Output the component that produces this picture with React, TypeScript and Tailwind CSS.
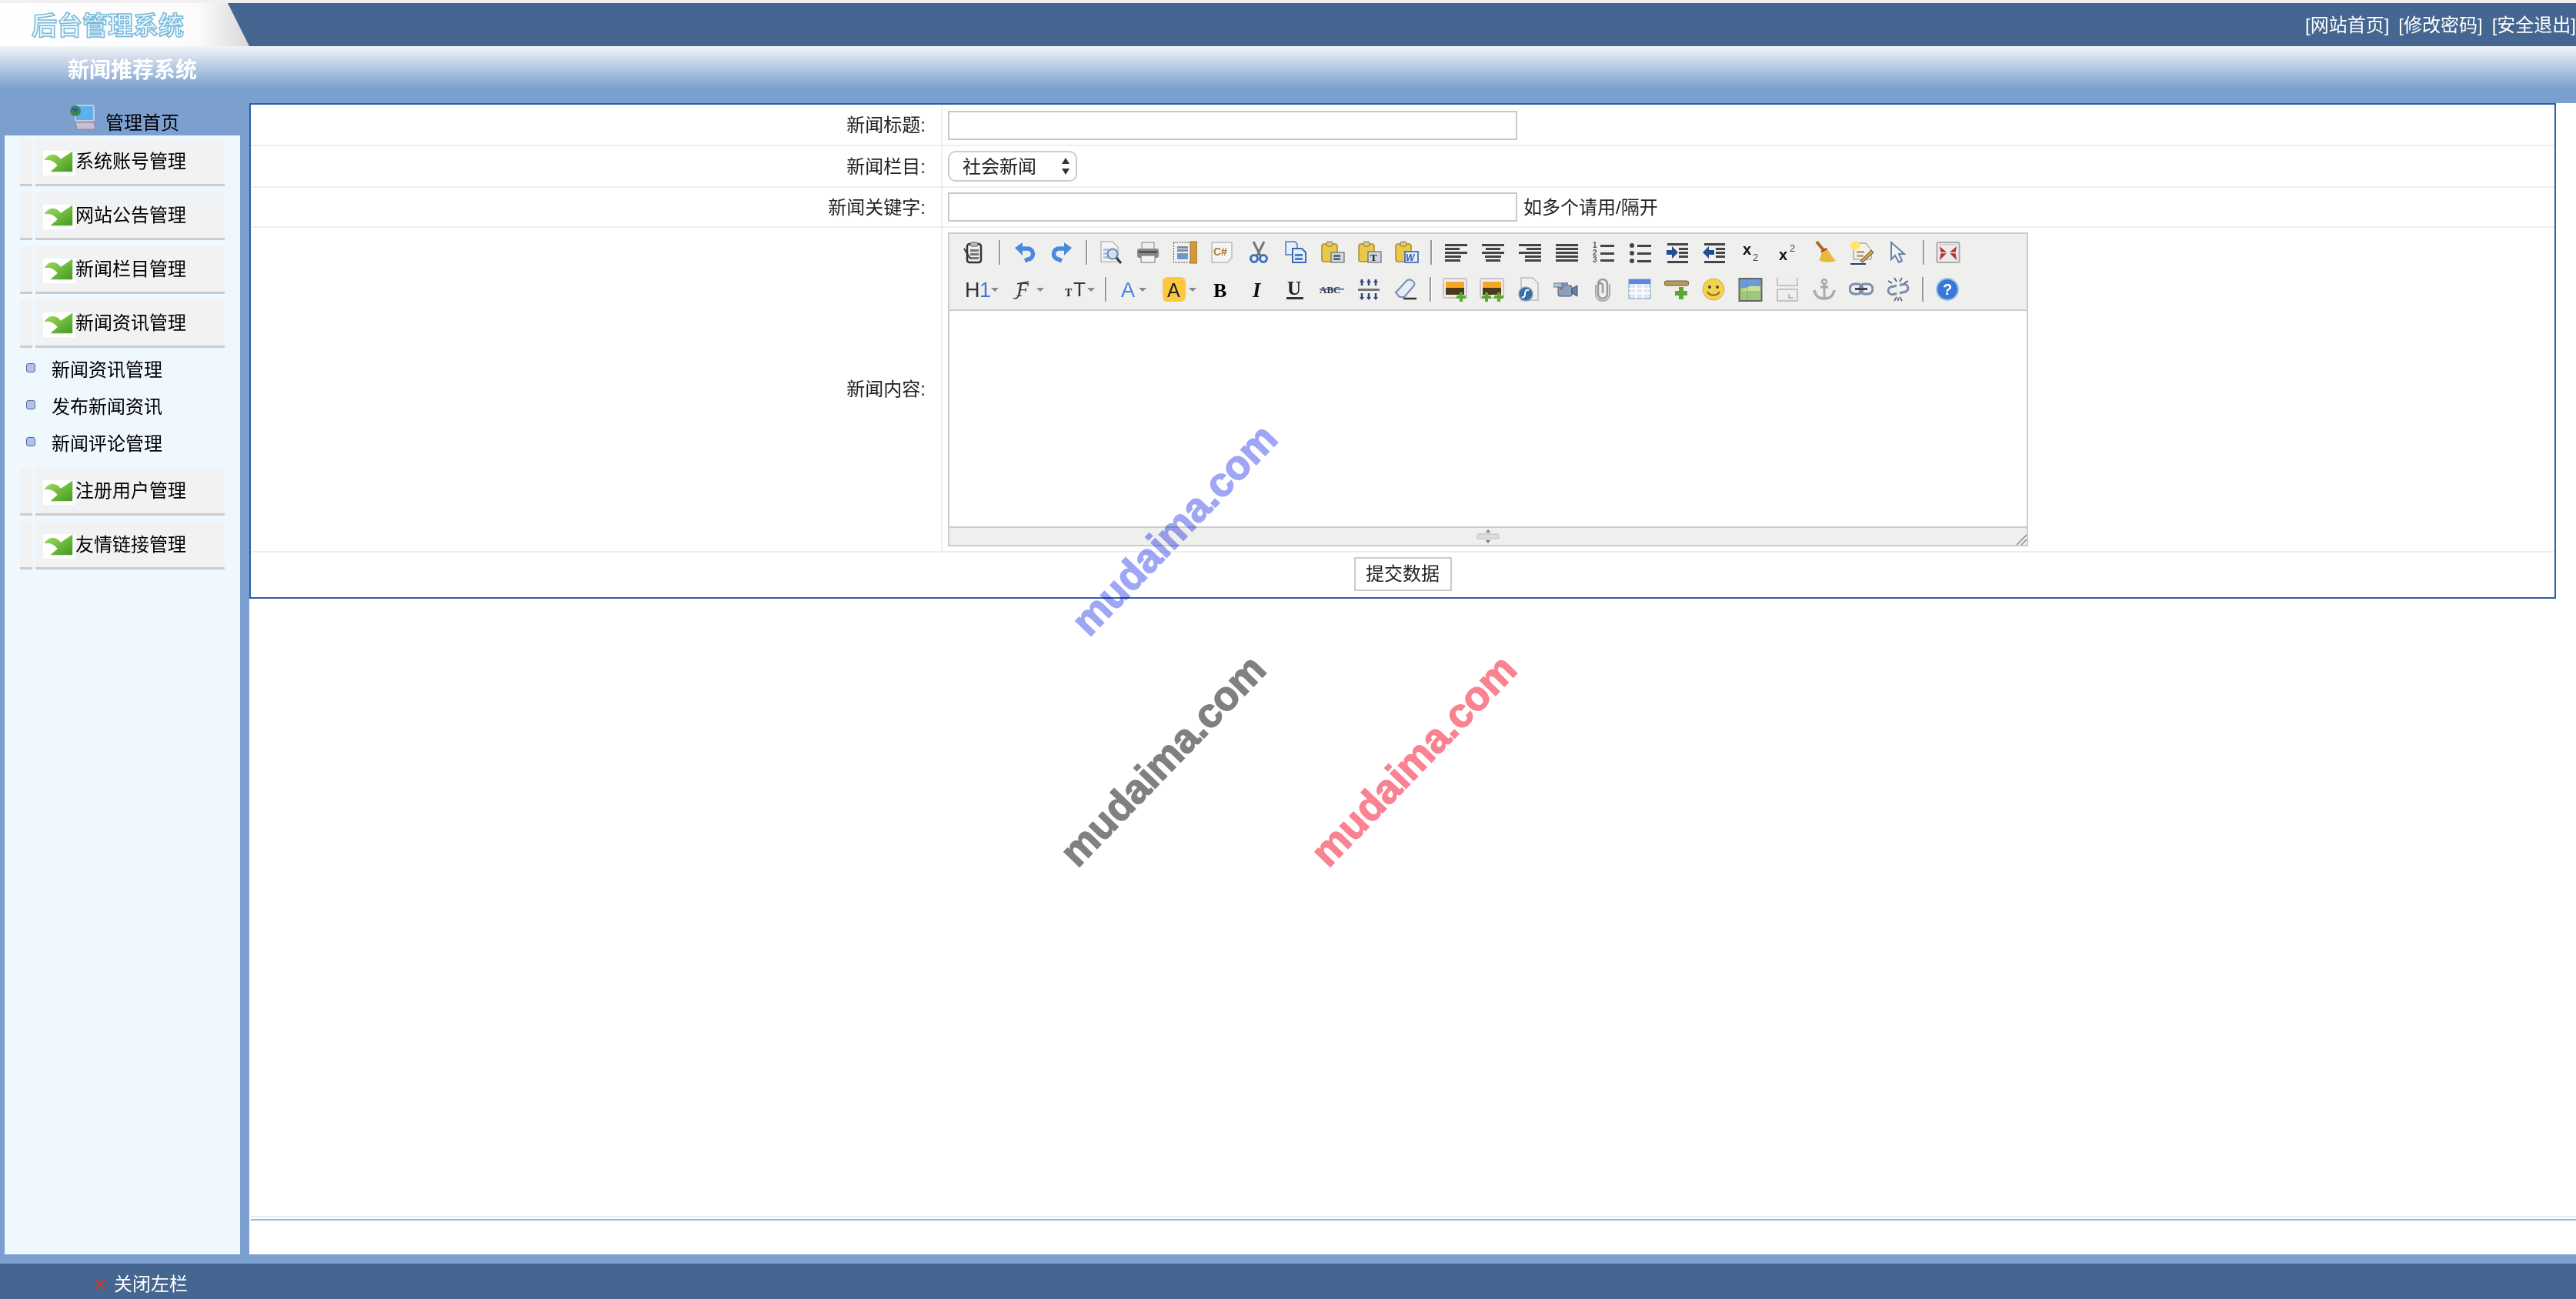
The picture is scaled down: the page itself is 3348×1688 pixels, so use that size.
import type { ReactNode } from "react";

const Svg = ({ w = 32, children }: { w?: number; children: ReactNode }) => (
  <svg width={w} height={32} viewBox={`0 0 ${w} 32`} className="block shrink-0">
    {children}
  </svg>
);

const Lines = ({ rows, color = "#444" }: { rows: [number, number, number][]; color?: string }) => (
  <>
    {rows.map(([x, y, w], i) => (
      <rect key={i} x={x} y={y} width={w} height={3} fill={color} />
    ))}
  </>
);

const Clip = ({ children }: { children?: ReactNode }) => (
  <>
    <rect x="2" y="5" width="20" height="23" rx="3" fill="#e9c84a" stroke="#a98a35" strokeWidth="1.5" />
    <rect x="8" y="2" width="8" height="6" rx="2" fill="#d8c88a" stroke="#8a7430" />
    {children}
  </>
);

const DropArrow = ({ x }: { x: number }) => <path d={`M${x} 14h10l-5 5z`} fill="#888" />;

const Img = ({ x = 1 }: { x?: number }) => (
  <>
    <rect x={x} y="2" width="30" height="25" rx="1" fill="#eee" stroke="#bbb" strokeWidth="1.5" />
    <rect x={x + 3} y="6" width="24" height="8" fill="#f5a623" />
    <rect x={x + 3} y="14" width="24" height="9" fill="#4a3a16" />
  </>
);

const Plus = ({ x, y }: { x: number; y: number }) => (
  <path d={`M${x - 2} ${y - 6}h4v4h4v4h-4v4h-4v-4h-4v-4h4z`} fill="#5aa832" />
);

const row1: (ReactNode | null)[] = [
  <Svg>
    <rect x="7" y="5" width="18" height="24" rx="3" fill="#eee" stroke="#333" strokeWidth="2.5" />
    <rect x="11" y="3" width="10" height="5" rx="2" fill="#bbb" stroke="#555" />
    <Lines color="#777" rows={[[11, 12, 11], [11, 17, 11], [11, 22, 11]]} />
    <path d="M3 11l8 13" stroke="#333" strokeWidth="2" />
  </Svg>,
  null,
  <Svg>
    <path d="M11 11h8a7 7 0 0 1 1 14l-4 2" fill="none" stroke="#4a8ade" strokeWidth="5.5" />
    <path d="M13 3v17L3 10z" fill="#4a8ade" />
  </Svg>,
  <Svg>
    <path d="M21 11h-8a7 7 0 0 0-1 14l4 2" fill="none" stroke="#4a8ade" strokeWidth="5.5" />
    <path d="M19 3v17l10-10z" fill="#4a8ade" />
  </Svg>,
  null,
  <Svg>
    <path d="M3 2h15l7 7v19H3z" fill="#f4f4f4" stroke="#bbb" strokeWidth="1.5" />
    <Lines color="#a9c4e4" rows={[[6, 11, 7], [6, 16, 6], [6, 21, 7]]} />
    <circle cx="18" cy="18" r="6.5" fill="#cfe0f2" stroke="#6a8aa8" strokeWidth="2" />
    <path d="M23 23l6 7" stroke="#333" strokeWidth="3" />
  </Svg>,
  <Svg>
    <rect x="8" y="3" width="16" height="9" fill="#eee" stroke="#888" />
    <rect x="2" y="11" width="28" height="12" rx="3" fill="#888" />
    <rect x="4" y="14" width="24" height="3" fill="#555" />
    <rect x="7" y="20" width="18" height="9" fill="#f4f4f4" stroke="#777" />
  </Svg>,
  <Svg>
    <rect x="1.5" y="3" width="24" height="26" fill="#f2f2f2" stroke="#444" strokeDasharray="2 1.5" />
    <Lines color="#7f8ea4" rows={[[6, 8, 14], [6, 12, 14]]} />
    <rect x="6" y="17" width="14" height="8" fill="#6a9ac8" />
    <rect x="23" y="2" width="9" height="28" fill="#d09a3c" stroke="#a0702a" />
  </Svg>,
  <Svg>
    <path d="M3 3h26v20l-6 6H3z" fill="#f4f4f4" stroke="#bbb" strokeWidth="1.5" />
    <text x="5" y="20" fontSize="14" fontWeight="700" fill="#a87c3c" fontFamily="Liberation Sans, sans-serif">C#</text>
  </Svg>,
  <Svg>
    <path d="M9 2l9 18M23 2l-9 18" stroke="#777" strokeWidth="3" />
    <circle cx="10" cy="24" r="4.5" fill="none" stroke="#3a70c0" strokeWidth="3" />
    <circle cx="22" cy="24" r="4.5" fill="none" stroke="#3a70c0" strokeWidth="3" />
  </Svg>,
  <Svg>
    <path d="M3 2h12l3 3v14H3z" fill="#e4effb" stroke="#4a7ac0" strokeWidth="1.5" />
    <path d="M12 11h12l5 5v13H12z" fill="#e4effb" stroke="#3a6ab4" strokeWidth="2" />
    <Lines color="#4a7ac0" rows={[[15, 18, 10], [15, 23, 10]]} />
  </Svg>,
  <Svg>
    <Clip />
    <rect x="14" y="16" width="17" height="13" fill="#cdd8e4" stroke="#555" />
    <Lines color="#667" rows={[[17, 19, 9], [17, 23, 9]]} />
  </Svg>,
  <Svg>
    <Clip />
    <rect x="14" y="15" width="17" height="14" fill="#cdd8e4" stroke="#555" />
    <text x="17" y="27" fontSize="13" fontWeight="700" fill="#111" fontFamily="Liberation Serif, serif">T</text>
  </Svg>,
  <Svg>
    <Clip />
    <rect x="14" y="15" width="17" height="14" fill="#e4effb" stroke="#2a5ab0" strokeWidth="1.5" />
    <text x="15" y="27" fontSize="12" fontWeight="700" fontStyle="italic" fill="#2a5ab0" fontFamily="Liberation Sans, sans-serif">W</text>
  </Svg>,
  null,
  <Svg><Lines rows={[[2, 5, 29], [2, 10, 19], [2, 15, 29], [2, 20, 21], [2, 25, 20]]} /></Svg>,
  <Svg><Lines rows={[[2, 5, 29], [7, 10, 19], [2, 15, 29], [6, 20, 21], [7, 25, 19]]} /></Svg>,
  <Svg><Lines rows={[[2, 5, 29], [12, 10, 19], [2, 15, 29], [10, 20, 21], [10, 25, 21]]} /></Svg>,
  <Svg><Lines rows={[[2, 5, 29], [2, 10, 29], [2, 15, 29], [2, 20, 29], [2, 25, 29]]} /></Svg>,
  <Svg>
    <Lines rows={[[12, 6, 18], [12, 16, 18], [12, 25, 18]]} />
    <text x="2" y="10" fontSize="10" fontWeight="700" fill="#555" fontFamily="Liberation Sans, sans-serif">1</text>
    <text x="2" y="20" fontSize="10" fontWeight="700" fill="#555" fontFamily="Liberation Sans, sans-serif">2</text>
    <text x="2" y="29" fontSize="10" fontWeight="700" fill="#555" fontFamily="Liberation Sans, sans-serif">3</text>
  </Svg>,
  <Svg>
    <Lines rows={[[12, 6, 18], [12, 16, 18], [12, 26, 18]]} />
    <circle cx="5" cy="7" r="3" fill="#444" />
    <circle cx="5" cy="17" r="3" fill="#444" />
    <circle cx="5" cy="27" r="3" fill="#444" />
  </Svg>,
  <Svg>
    <Lines rows={[[3, 4, 27], [18, 10, 12], [18, 15, 12], [18, 20, 12], [3, 27, 27]]} />
    <path d="M2 13h7V8l8 8-8 8v-5H2z" fill="#1f4f90" />
  </Svg>,
  <Svg>
    <Lines rows={[[3, 4, 27], [18, 10, 12], [18, 15, 12], [18, 20, 12], [3, 27, 27]]} />
    <path d="M16 13H9V8l-8 8 8 8v-5h7z" fill="#1f4f90" />
  </Svg>,
  <Svg>
    <text x="5" y="19" fontSize="20" fontWeight="700" fill="#111" fontFamily="Liberation Sans, sans-serif">x</text>
    <text x="18" y="27" fontSize="13" fill="#446" fontFamily="Liberation Sans, sans-serif">2</text>
  </Svg>,
  <Svg>
    <text x="4" y="26" fontSize="20" fontWeight="700" fill="#111" fontFamily="Liberation Sans, sans-serif">x</text>
    <text x="18" y="15" fontSize="13" fill="#446" fontFamily="Liberation Sans, sans-serif">2</text>
  </Svg>,
  <Svg>
    <path d="M5 2l9 11" stroke="#a86a2a" strokeWidth="4" />
    <path d="M11 13l7-3c5 8 8 13 12 17-8 3-16 2-22-1 3-4 4-8 3-13z" fill="#e6b83c" />
    <path d="M11 15l7-4" stroke="#c0392b" strokeWidth="2.5" />
  </Svg>,
  <Svg>
    <path d="M5 4h16l7 9v12H5z" fill="#f6f1e2" stroke="#888" />
    <circle cx="7" cy="7" r="6" fill="#ffe666" />
    <Lines color="#b8a890" rows={[[9, 14, 10], [9, 19, 9]]} />
    <path d="M14 27l14-14 3 3-14 13z" fill="#d9a233" stroke="#445" />
    <path d="M1 31h20" stroke="#1f3f70" strokeWidth="2" />
  </Svg>,
  <Svg>
    <path d="M6 3v22l5-5 5 9 4-2-4-9h7z" fill="#f0f4fa" stroke="#6a82a8" strokeWidth="2" />
  </Svg>,
  null,
  <Svg>
    <rect x="1.5" y="3" width="29" height="26" rx="1.5" fill="#ececec" stroke="#aaa" strokeWidth="2" />
    <path d="M6 10l6 5H7zM26 10l-6 5h5zM6 24l6-6H7zM26 24l-6-6h5z" fill="#b8312a" stroke="#b8312a" strokeWidth="1.5" />
    <rect x="4" y="5" width="24" height="1.5" fill="#ccc" />
  </Svg>,
];

const row2: ReactNode[] = [
  <Svg w={64}>
    <text x="12" y="26" fontSize="27" fill="#333" fontFamily="Liberation Sans, sans-serif">H</text>
    <text x="31" y="26" fontSize="27" fill="#3b78d8" fontFamily="Liberation Sans, sans-serif">1</text>
    <DropArrow x={46} />
  </Svg>,
  <Svg w={60}>
    <text x="15" y="25" fontSize="26" fontStyle="italic" fill="#333" fontFamily="Liberation Serif, serif">F</text>
    <path d="M11 27c3 2 5 1 7-3M16 9c4-2 10-1 15-3" stroke="#333" strokeWidth="1.5" fill="none" />
    <DropArrow x={41} />
  </Svg>,
  <Svg w={63}>
    <text x="18" y="25" fontSize="14" fontWeight="700" fill="#222" fontFamily="Liberation Serif, serif">T</text>
    <text x="29" y="25" fontSize="26" fill="#333" fontFamily="Liberation Sans, sans-serif">T</text>
    <DropArrow x={47} />
  </Svg>,
  null,
  <Svg w={55}>
    <text x="12" y="26" fontSize="27" fill="#4a80e0" fontFamily="Liberation Sans, sans-serif">A</text>
    <DropArrow x={35} />
  </Svg>,
  <Svg w={63}>
    <rect x="11" y="0" width="30" height="32" rx="6" fill="#fdc840" />
    <text x="17" y="26" fontSize="25" fill="#222" fontFamily="Liberation Sans, sans-serif">A</text>
    <DropArrow x={45} />
  </Svg>,
  <Svg>
    <text x="6" y="26" fontSize="26" fontWeight="700" fill="#000" fontFamily="Liberation Serif, serif">B</text>
  </Svg>,
  <Svg>
    <text x="9" y="26" fontSize="27" fontWeight="700" fontStyle="italic" fill="#111" fontFamily="Liberation Serif, serif">I</text>
  </Svg>,
  <Svg>
    <text x="6" y="23" fontSize="25" fontWeight="700" fill="#222" fontFamily="Liberation Serif, serif">U</text>
    <rect x="5" y="26" width="22" height="3" fill="#333" />
  </Svg>,
  <Svg>
    <text x="0" y="21" fontSize="13" fontWeight="700" fill="#333" fontFamily="Liberation Serif, serif">ABC</text>
    <rect x="0" y="15" width="32" height="1.5" fill="#2a5ab0" />
  </Svg>,
  <Svg>
    <rect x="2" y="15" width="28" height="3" fill="#777" />
    <path d="M7 3v8M16 3v8M25 3v8M7 21v8M16 21v8M25 21v8" stroke="#2a4a80" strokeWidth="2.5" />
    <path d="M4 7l3-4 3 4zM13 7l3-4 3 4zM22 7l3-4 3 4zM4 26l3 4 3-4zM13 26l3 4 3-4zM22 26l3 4 3-4z" fill="#2a4a80" />
  </Svg>,
  <Svg>
    <path d="M3 20L17 5c2-2 5-2 8 0 3 2 3 5 1 7L14 26H8z" fill="#e4ecf6" stroke="#7a8ea8" strokeWidth="2" />
    <path d="M13 28h17" stroke="#333" strokeWidth="2.5" />
  </Svg>,
  null,
  <Svg>
    <Img />
    <Plus x={24} y={26} />
  </Svg>,
  <Svg>
    <Img />
    <Plus x={9} y={26} />
    <Plus x={25} y={26} />
  </Svg>,
  <Svg>
    <path d="M6 1h15l7 7v22H6z" fill="#f0f0f0" stroke="#bbb" strokeWidth="1.5" />
    <circle cx="12" cy="22" r="9" fill="#3a6ea8" stroke="#8aa0b8" strokeWidth="1.5" />
    <path d="M16 17c-4-1-5 2-5 5s-1 5-4 4" stroke="#fff" strokeWidth="2" fill="none" />
  </Svg>,
  <Svg>
    <rect x="6" y="11" width="18" height="14" rx="2" fill="#8aa0bc" stroke="#4a5e7c" />
    <rect x="0" y="8" width="14" height="5" rx="1" fill="#b8c8dc" stroke="#5a6e8c" />
    <rect x="10" y="7" width="9" height="5" fill="#7a8ea8" />
    <circle cx="10" cy="15" r="1.5" fill="#d84a3a" />
    <path d="M24 15l7-4v14l-7-4z" fill="#6a80a0" stroke="#3a4e6c" />
  </Svg>,
  <Svg>
    <path d="M10 9a6 6 0 0 1 12 0v13a6 6 0 0 1-12 0V11a3 3 0 0 1 6 0v10" fill="none" stroke="#999" strokeWidth="2.5" />
    <path d="M7 10v13a9 8 0 0 0 18 0V9" fill="none" stroke="#aaa" strokeWidth="2" />
  </Svg>,
  <Svg>
    <rect x="2" y="3" width="28" height="25" fill="#dfe8f6" stroke="#7a94bc" />
    <rect x="2" y="3" width="28" height="6" fill="#5a8ae0" />
    <path d="M2 15h28M2 21h28M11 9v19M20 9v19" stroke="#fff" strokeWidth="2" />
  </Svg>,
  <Svg>
    <rect x="0" y="5" width="32" height="6" rx="3" fill="#b89a5c" stroke="#6a5a30" />
    <path d="M19 13h6v5h5v6h-5v5h-6v-5h-5v-6h5z" fill="#5aa832" />
  </Svg>,
  <Svg>
    <circle cx="16" cy="16" r="14" fill="#f5d24c" stroke="#d8b040" />
    <circle cx="11" cy="13" r="2" fill="#444" />
    <circle cx="21" cy="13" r="2" fill="#444" />
    <path d="M8 19c3 6 13 6 16 0" fill="none" stroke="#8a6a20" strokeWidth="2" />
  </Svg>,
  <Svg>
    <rect x="1.5" y="2" width="29" height="29" fill="#9cc87c" stroke="#666" strokeWidth="2" />
    <rect x="3" y="3" width="26" height="11" fill="#6a9ae0" />
    <path d="M3 20c8-9 16-10 26-8v6H3z" fill="#c8e090" />
    <path d="M12 3v27M3 11h26" stroke="#5a8aa0" strokeOpacity=".5" />
  </Svg>,
  <Svg>
    <path d="M3 1v10h26V1" fill="#eee" stroke="#c4c4c4" strokeWidth="2" />
    <path d="M3 16h26v15H3z" fill="#eee" stroke="#c4c4c4" strokeWidth="2" />
    <path d="M18 22v5h6" fill="none" stroke="#bbb" strokeWidth="2" />
  </Svg>,
  <Svg>
    <circle cx="16" cy="6" r="3" fill="none" stroke="#aaa" strokeWidth="2.5" />
    <path d="M16 9v19M11 13h10" stroke="#aaa" strokeWidth="3" />
    <path d="M3 17c1 7 6 11 13 11s12-4 13-11" fill="none" stroke="#aaa" strokeWidth="3.5" />
  </Svg>,
  <Svg>
    <rect x="1" y="9" width="17" height="13" rx="6.5" fill="none" stroke="#7a8eac" strokeWidth="3" />
    <rect x="14" y="9" width="17" height="13" rx="6.5" fill="none" stroke="#7a8eac" strokeWidth="3" />
    <rect x="8" y="14" width="16" height="3" fill="#445" />
  </Svg>,
  <Svg>
    <path d="M15 11H8a5 5 0 0 0 0 10h5M17 21h7a5 5 0 0 0 0-10h-5" fill="none" stroke="#7a8eac" strokeWidth="3" transform="rotate(-12 16 16)" />
    <path d="M11 1l3 5M21 1l-3 5M3 5l5 3M29 5l-5 3M11 31l3-5M21 31l-3-5M16 27v4" stroke="#556" strokeWidth="1.5" />
  </Svg>,
  null,
  <Svg>
    <circle cx="16" cy="16" r="14" fill="#3a78d8" stroke="#a0c0e8" strokeWidth="2" />
    <text x="10" y="23" fontSize="20" fontWeight="700" fill="#fff" fontFamily="Liberation Sans, sans-serif">?</text>
  </Svg>,
];

const row2Widths = [64, 60, 63, 16, 55, 63];

const ToolSep = ({ wide }: { wide?: boolean }) => (
  <div className={`flex shrink-0 justify-center ${wide ? "w-[18px]" : "w-4"}`}>
    <div className="h-8 w-[3px] border-r border-white bg-[#999]" />
  </div>
);

const menuItems1 = ["系统账号管理", "网站公告管理", "新闻栏目管理", "新闻资讯管理"];
const subItems = ["新闻资讯管理", "发布新闻资讯", "新闻评论管理"];
const menuItems2 = ["注册用户管理", "友情链接管理"];

const MenuItem = ({ label }: { label: string }) => (
  <div className="mb-2 flex h-[62px] pl-5">
    <div className="h-full w-4 border-b-[3px] border-[#ccc] bg-[#f0f2f4]" />
    <div className="ml-1 flex h-full w-[246px] items-start border-b-[3px] border-[#ccc] bg-[#f0f2f4] pt-4 pl-[10px]">
      <div className="h-8 w-[42px] shrink-0 bg-white">
        <svg width="42" height="32" viewBox="0 0 42 32">
          <defs>
            <linearGradient id="arrow" x1="0" y1="0" x2="1" y2="1">
              <stop offset="0" stopColor="#a8e060" />
              <stop offset="1" stopColor="#3f9a20" />
            </linearGradient>
          </defs>
          <path d="M2 12C6 5 14 3 20 8l3 3L38 1v26H10l9-8C15 14 9 10 2 12z" fill="url(#arrow)" stroke="#6ab83a" strokeWidth=".5" />
        </svg>
      </div>
      <span className="mt-[1px] text-[24px] leading-[26px] text-black">{label}</span>
    </div>
  </div>
);

function App() {
  return (
    <div className="relative flex h-[1688px] w-[3348px] flex-col overflow-hidden bg-[#7ba0cf] [font-family:'Liberation_Sans','Noto_Sans_CJK_SC',sans-serif]">
      <div className="h-1 bg-[#f0f0f0]" />
      {/* top bar */}
      <div className="flex h-14 items-center justify-between bg-[#446690]">
        <div className="relative h-14 w-[326px] self-start">
          <svg width="326" height="56" viewBox="0 0 326 56" className="absolute top-0 left-0">
            <defs>
              <linearGradient id="logo" x1="0" y1="0" x2="1" y2="0">
                <stop offset="0" stopColor="#ffffff" />
                <stop offset=".8" stopColor="#fbfbfb" />
                <stop offset="1" stopColor="#d8d8d8" />
              </linearGradient>
            </defs>
            <path d="M0 0H296L324 56H0z" fill="url(#logo)" />
          </svg>
          <span className="absolute top-[10px] left-[41px] text-[33px] leading-10 font-bold text-[#eaf6fb] [-webkit-text-stroke:1.5px_#74b8da]">
            后台管理系统
          </span>
        </div>
        <div className="flex gap-3 pt-[1px] text-[24px] leading-8 whitespace-nowrap text-white">
          <span>[网站首页]</span>
          <span>[修改密码]</span>
          <span>[安全退出]</span>
        </div>
      </div>
      {/* title band */}
      <div className="h-[74px] bg-linear-to-b from-[#f2f4f6] from-0% to-[#7ba0cf] to-75% pt-[16px] pl-[88px]">
        <span className="text-[28px] leading-8 font-bold text-white">新闻推荐系统</span>
      </div>
      {/* body */}
      <div className="flex h-[1496px] shrink-0">
        <div className="flex w-[324px] shrink-0 flex-col">
          <div className="flex h-[42px] pl-[90px]">
            <svg width="34" height="34" viewBox="0 0 34 34" className="mt-[1px]">
              <rect x="8" y="2" width="24" height="20" rx="2" fill="#5cb0f0" stroke="#c8c8d8" strokeWidth="2" />
              <circle cx="8" cy="9" r="7" fill="#3a8a48" />
              <path d="M3 7c3-3 6-2 9 0l-4 5z" fill="#2a5ac0" />
              <path d="M8 24h24l2 9H10z" fill="#c8c0d0" stroke="#8a80a0" />
            </svg>
            <span className="mt-[12px] ml-[13px] text-[24px] leading-7 text-black">管理首页</span>
          </div>
          <div className="ml-[6px] flex h-[1454px] w-[306px] flex-col bg-[#eff7ff] pt-1">
            {menuItems1.map((m) => (
              <MenuItem key={m} label={m} />
            ))}
            <div className="-mt-2 mb-[8px] flex flex-col pt-[4px]">
              {subItems.map((s) => (
                <div key={s} className="flex h-12 items-center pl-[28px]">
                  <div className="mb-[4px] h-3 w-3 rounded-[3px] border border-[#667] bg-[#a8c4f4]" />
                  <span className="mt-[2px] ml-[21px] text-[24px] text-black">{s}</span>
                </div>
              ))}
            </div>
            {menuItems2.map((m) => (
              <MenuItem key={m} label={m} />
            ))}
          </div>
        </div>

        <div className="flex h-full min-w-0 flex-1 flex-col bg-white">
          {/* form table */}
          <div className="mr-[26px] flex h-[644px] flex-col border-2 border-[#2b5fa8] text-[24px] text-[#222]">
            <div className="flex h-[54px] border-b-2 border-[#eee]">
              <div className="flex w-[899px] items-center justify-end border-r-2 border-[#eee] pt-[2px] pr-[20px]">新闻标题:</div>
              <div className="pt-2 pl-[7px]">
                <input className="block h-[38px] w-[740px] border-2 border-[#c8c8c8] bg-white outline-none" />
              </div>
            </div>
            <div className="flex h-[54px] border-b-2 border-[#eee]">
              <div className="flex w-[899px] items-center justify-end border-r-2 border-[#eee] pt-[2px] pr-[20px]">新闻栏目:</div>
              <div className="relative pt-[6px] pl-[7px]">
                <select className="block h-10 w-[168px] appearance-none rounded-[10px] border-2 border-[#ccc] bg-white pt-[2px] pl-[17px] text-[24px] leading-none text-[#222] outline-none">
                  <option>社会新闻</option>
                </select>
                <svg width="12" height="24" viewBox="0 0 12 24" className="absolute top-[14px] left-[154px]">
                  <path d="M6 1l5 8H1zM6 23l5-8H1z" fill="#333" />
                </svg>
              </div>
            </div>
            <div className="flex h-[52px] border-b-2 border-[#eee]">
              <div className="flex w-[899px] items-center justify-end border-r-2 border-[#eee] pt-[2px] pr-[20px]">新闻关键字:</div>
              <div className="flex items-start pt-[6px] pl-[7px]">
                <input className="block h-[38px] w-[740px] border-2 border-[#c8c8c8] bg-white outline-none" />
                <span className="mt-[1px] ml-2 leading-[38px]">如多个请用/隔开</span>
              </div>
            </div>
            <div className="flex h-[422px] border-b-2 border-[#eee]">
              <div className="flex w-[899px] items-center justify-end border-r-2 border-[#eee] pr-[20px]">新闻内容:</div>
              <div className="pt-[6px] pl-[7px]">
                <div className="flex h-[408px] w-[1404px] flex-col border-2 border-[#ccc]">
                  <div className="h-[100px] border-b-2 border-[#ccc] bg-[#efefee] pl-2">
                    <div className="flex h-12 items-center">
                      {row1.map((icon, i) =>
                        icon === null ? (
                          <ToolSep key={i} wide={i === 1} />
                        ) : (
                          <div key={i} className="flex w-12 shrink-0 justify-center">
                            {icon}
                          </div>
                        ),
                      )}
                    </div>
                    <div className="flex h-12 items-center">
                      {row2.map((icon, i) =>
                        icon === null ? (
                          <ToolSep key={i} />
                        ) : i < row2Widths.length ? (
                          <div key={i} className="shrink-0">
                            {icon}
                          </div>
                        ) : (
                          <div key={i} className="flex w-12 shrink-0 justify-center">
                            {icon}
                          </div>
                        ),
                      )}
                    </div>
                  </div>
                  <div className="h-[280px] bg-white" />
                  <div className="relative flex h-6 items-center justify-center border-t-2 border-[#ccc] bg-[#efefee]">
                    <svg width="30" height="20" viewBox="0 0 30 20">
                      <path d="M15 1l3 4h-6zM15 19l3-4h-6z" fill="#777" />
                      <rect x="1" y="7" width="28" height="6" rx="2" fill="#ddd" stroke="#bbb" />
                    </svg>
                    <svg width="14" height="14" viewBox="0 0 14 14" className="absolute right-0 bottom-0">
                      <path d="M1 14L14 1M7 14l7-7" stroke="#888" strokeWidth="1.5" />
                    </svg>
                  </div>
                </div>
              </div>
            </div>
            <div className="flex flex-1 justify-center pt-[6px]">
              <button className="h-[44px] w-[127px] border-2 border-[#ccc] bg-white text-[24px] leading-none text-[#222]">提交数据</button>
            </div>
          </div>
          <div className="mt-[806px] ml-[2px] h-[2px] bg-[#a8b0b8] shadow-[0_-4px_0_#e0ecfb]" />
        </div>
      </div>
      <div className="h-3 shrink-0" />
      {/* footer */}
      <div className="flex h-[46px] shrink-0 items-center bg-[#446690] pt-[8px] pl-[123px]">
        <svg width="14" height="14" viewBox="0 0 14 14">
          <path d="M1 1l12 12M13 1L1 13" stroke="#e03020" strokeWidth="2" />
        </svg>
        <span className="ml-[11px] text-[24px] leading-8 text-white">关闭左栏</span>
      </div>

      {/* watermarks */}
      <span className="absolute top-[688px] left-[1526px] -translate-x-1/2 -translate-y-1/2 -rotate-[46deg] text-[53px] leading-none font-bold whitespace-nowrap text-[#9fa6f5] mix-blend-multiply [-webkit-text-stroke:1.5px_#9fa6f5]">mudaima.com</span>
      <span className="absolute top-[988px] left-[1511px] -translate-x-1/2 -translate-y-1/2 -rotate-[46deg] text-[53px] leading-none font-bold whitespace-nowrap text-[#808080] [-webkit-text-stroke:1.5px_#808080]">mudaima.com</span>
      <span className="absolute top-[988px] left-[1837px] -translate-x-1/2 -translate-y-1/2 -rotate-[46deg] text-[53px] leading-none font-bold whitespace-nowrap text-[#fa8291] [-webkit-text-stroke:1.5px_#fa8291]">mudaima.com</span>
    </div>
  );
}

export default App;
